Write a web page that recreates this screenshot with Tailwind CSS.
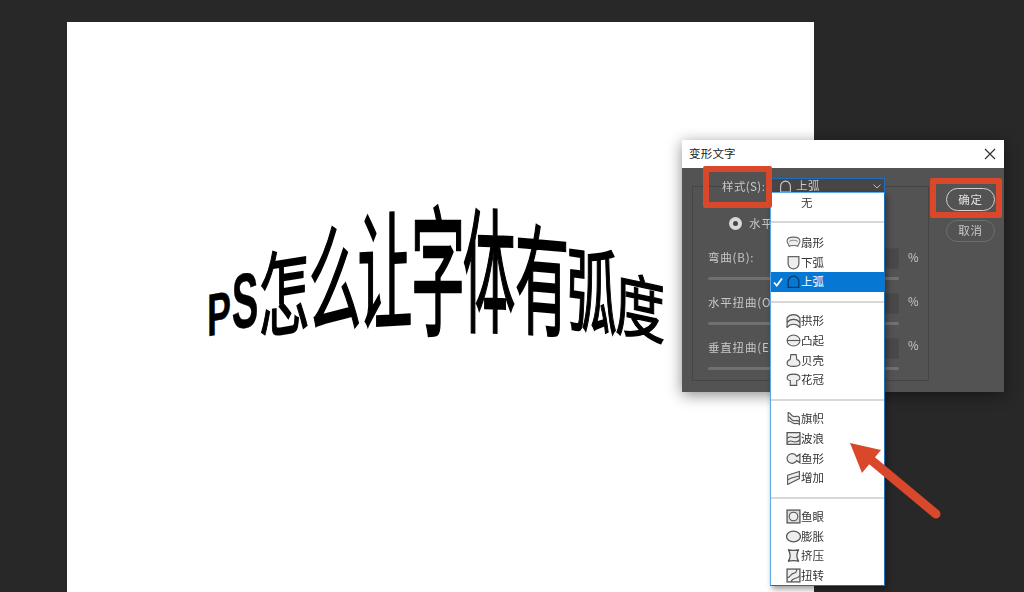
<!DOCTYPE html>
<html lang="zh">
<head>
<meta charset="utf-8">
<script src="https://cdn.jsdelivr.net/npm/@tailwindcss/browser@4"></script>
</head>
<body class="m-0 w-[1024px] h-[592px] overflow-hidden bg-[#282828] font-['Liberation_Sans','Noto_Sans_CJK_SC',sans-serif]">
<div class="relative w-[1024px] h-[592px] overflow-hidden pt-[22px] pl-[67px] blur-[0.35px]">
  <!-- canvas -->
  <div class="w-[747px] h-[570px] bg-white"></div>

  <!-- warped text -->
  <div class="absolute inset-0 text-black text-[50px] leading-[50px] font-['Noto_Sans_CJK_SC',sans-serif] [-webkit-text-stroke:0.9px_#000]">
    <span class="absolute left-[194px] top-[289px] w-[50px] h-[50px] text-center font-bold font-['Liberation_Sans'] [-webkit-text-stroke:0.3px_#000] [transform:skewY(-10deg)_scale(.72,1.2)]">P</span>
    <span class="absolute left-[220px] top-[276px] w-[50px] h-[50px] text-center font-bold font-['Liberation_Sans'] [-webkit-text-stroke:0.3px_#000] [transform:skewY(-8deg)_scale(.8,1.55)]">S</span>
    <span class="absolute left-[259px] top-[262px] w-[50px] h-[50px] text-center [transform:skewY(-9deg)_scale(1.02,1.85)]">怎</span>
    <span class="absolute left-[310px] top-[246px] w-[50px] h-[50px] text-center [transform:skewY(-5deg)_scale(1.05,2.3)]">么</span>
    <span class="absolute left-[360px] top-[238px] w-[50px] h-[50px] text-center [transform:skewY(-3deg)_scale(1.1,2.55)]">让</span>
    <span class="absolute left-[413px] top-[237px] w-[50px] h-[50px] text-center [transform:scale(1.08,2.8)]">字</span>
    <span class="absolute left-[464px] top-[238px] w-[50px] h-[50px] text-center [transform:skewY(2deg)_scale(1.05,2.7)]">体</span>
    <span class="absolute left-[517px] top-[248px] w-[50px] h-[50px] text-center [transform:skewY(5deg)_scale(1.08,2.4)]">有</span>
    <span class="absolute left-[567px] top-[260px] w-[50px] h-[50px] text-center [transform:skewY(8deg)_scale(1,1.85)]">弧</span>
    <span class="absolute left-[615px] top-[278px] w-[50px] h-[50px] text-center [transform:skewY(12deg)_scale(1,1.4)]">度</span>
  </div>

  <!-- dialog -->
  <div class="absolute left-[682px] top-[140px] w-[322px] h-[252px] bg-[#535353] shadow-[0_3px_14px_rgba(0,0,0,.45)] text-[11.5px] text-[#c8c8c8] font-['Noto_Sans_CJK_SC',sans-serif]">
    <div class="h-[28px] bg-white flex items-center justify-between pl-[7px] pr-[8px] text-[#222] tracking-[.2px]">
      <span>变形文字</span>
      <svg class="w-[12px] h-[12px]" viewBox="0 0 12 12"><path d="M1 1l10 10M11 1L1 11" stroke="#333" stroke-width="1.2" fill="none"/></svg>
    </div>
    <div class="relative flex h-[224px] pt-[18px] pl-[10px]">
      <div class="w-[237px] h-[195px] border border-[#454545] relative">
        <div class="absolute left-[15px] top-[60px] w-[191px]">
          <div class="flex items-center h-[22px] justify-between">
            <span class="tracking-[.8px]">弯曲(B):</span>
            <span class="w-[38px] h-[21px] bg-[#484848] border border-[#4c4c4c]"></span>
          </div>
          <div class="h-[3px] bg-[#707070] rounded-full mt-[8px]"></div>
          <div class="flex items-center h-[22px] justify-between mt-[12px]">
            <span class="tracking-[.8px]">水平扭曲(O</span>
            <span class="w-[38px] h-[21px] bg-[#484848] border border-[#4c4c4c]"></span>
          </div>
          <div class="h-[3px] bg-[#707070] rounded-full mt-[8px]"></div>
          <div class="flex items-center h-[22px] justify-between mt-[12px]">
            <span class="tracking-[.8px]">垂直扭曲(E</span>
            <span class="w-[38px] h-[21px] bg-[#484848] border border-[#4c4c4c]"></span>
          </div>
          <div class="h-[3px] bg-[#707070] rounded-full mt-[8px]"></div>
        </div>
        <div class="absolute left-[36px] top-[28px] flex items-center gap-[7px]">
          <span class="w-[13px] h-[13px] rounded-full bg-[#d8d8d8] flex items-center justify-center"><span class="w-[5px] h-[5px] rounded-full bg-[#444]"></span></span>
          <span class="tracking-[1px]">水平</span>
        </div>
      </div>
      <div class="flex flex-col ml-[17px] pt-[2px] gap-[9px]">
        <button class="w-[49px] h-[23px] rounded-full border border-[#d0d0d0] text-[#e0e0e0] text-[11.5px] tracking-[.8px]">确定</button>
        <button class="w-[49px] h-[22px] rounded-full border border-[#6e6e6e] text-[#c8c8c8] text-[11.5px] tracking-[.8px]">取消</button>
      </div>
      <!-- percent signs -->
      <span class="absolute left-[226px] top-[81px] text-[11.5px]">%</span>
      <span class="absolute left-[226px] top-[125px] text-[11.5px]">%</span>
      <span class="absolute left-[226px] top-[169px] text-[11.5px]">%</span>
    </div>
    <span class="absolute left-[40px] top-[38px] tracking-[.4px]">样式(S):</span>
    <div class="absolute left-[89px] top-[38px] w-[114px] h-[15px] bg-[#464646] border border-[#1a6fc0] border-b-0 flex items-center pl-[7px] gap-[4px] text-[#c8c8c8]">
      <svg class="w-[13px] h-[13px]" viewBox="0 0 12 12"><path d="M1.500 11V5.500a4.500 4.500 0 0 1 9 0V11z" fill="none" stroke="#d0d0d0" stroke-width="1"/></svg>
      <span class="tracking-[.4px]">上弧</span>
      <svg class="absolute right-[3px] top-[5px] w-[8px] h-[5px]" viewBox="0 0 8 5"><path d="M.5.5L4 4 7.500.5" fill="none" stroke="#bbb"/></svg>
    </div>
  </div>

  <!-- dropdown menu -->
  <div class="absolute left-[770px] top-[192px] w-[115px] h-[394px] bg-white border border-[#5ba7e8] border-r-[#1d6fb8] border-b-[#1d6fb8] shadow-[2px_3px_6px_rgba(0,0,0,.4)] text-[11.5px] leading-[19.6px] text-[#333] font-['Noto_Sans_CJK_SC',sans-serif]">
    <div class="h-[18.6px] pl-[30px] flex items-center">无</div>
    <div class="h-[21.4px] flex items-center"><div class="w-full h-[2px] bg-[#d8d8d8]"></div></div>
    <div class="h-[19.6px] pl-[30px] flex items-center relative">扇形
      <svg class="absolute left-[15px] top-[2px] w-[15px] h-[15px]" viewBox="0 0 14 14"><path d="M1 5.500C1 2.500 4 2 7 2s6 .5 6 3.500c0 2-1.500 3-2 5-1.500-1-6.500-1-8 0-.5-2-2-3-2-5z" fill="#eee" stroke="#666"/><path d="M3 6c2-1.500 6-1.500 8 0" fill="none" stroke="#666" stroke-width=".7"/></svg></div>
    <div class="h-[19.6px] pl-[30px] flex items-center relative">下弧
      <svg class="absolute left-[15px] top-[2px] w-[15px] h-[15px]" viewBox="0 0 14 14"><path d="M2 1.500h10v6.500a5 5 0 0 1-10 0z" fill="#eee" stroke="#666" stroke-width="1.200"/></svg></div>
    <div class="h-[19.6px] pl-[30px] flex items-center relative bg-[#0678d4] text-white">上弧
      <svg class="absolute left-[2px] top-[5px] w-[10px] h-[10px]" viewBox="0 0 10 10"><path d="M1 5.500L3.800 8.500 9 1.500" fill="none" stroke="#fff" stroke-width="1.800"/></svg>
      <svg class="absolute left-[15px] top-[2px] w-[15px] h-[15px]" viewBox="0 0 14 14"><path d="M2 12.500V7a5 5 0 0 1 10 0v5.500z" fill="#0678d4" stroke="#0a3a66" stroke-width="1.200"/></svg></div>
    <div class="h-[19.6px] flex items-center"><div class="w-full h-[2px] bg-[#d8d8d8]"></div></div>
    <div class="h-[19.6px] pl-[30px] flex items-center relative">拱形
      <svg class="absolute left-[15px] top-[2px] w-[15px] h-[15px]" viewBox="0 0 14 14"><path d="M1 4.500c3-4 9-4 12 0v9c-3-4-9-4-12 0zM1 9c3-4 9-4 12 0" fill="#eee" stroke="#555" stroke-width="1.100"/></svg></div>
    <div class="h-[19.6px] pl-[30px] flex items-center relative">凸起
      <svg class="absolute left-[15px] top-[2px] w-[15px] h-[15px]" viewBox="0 0 14 14"><ellipse cx="7" cy="7" rx="6" ry="5.200" fill="#eee" stroke="#555"/><path d="M1 7h12" stroke="#555"/></svg></div>
    <div class="h-[19.6px] pl-[30px] flex items-center relative">贝壳
      <svg class="absolute left-[15px] top-[2px] w-[15px] h-[15px]" viewBox="0 0 14 14"><path d="M4.500 1.500h5L10 6c2 .5 3 2 3 3.500 0 2-2.500 3-6 3s-6-1-6-3C1 8 2 6.500 4 6z" fill="#eee" stroke="#555"/></svg></div>
    <div class="h-[19.6px] pl-[30px] flex items-center relative">花冠
      <svg class="absolute left-[15px] top-[2px] w-[15px] h-[15px]" viewBox="0 0 14 14"><path d="M7 2c4 0 6 1.500 6 3.500 0 1.500-2 2.500-3 2.500v4.500H4V8C3 8 1 7 1 5.500 1 3.500 3 2 7 2z" fill="#eee" stroke="#555"/></svg></div>
    <div class="h-[19.6px] flex items-center"><div class="w-full h-[2px] bg-[#d8d8d8]"></div></div>
    <div class="h-[19.6px] pl-[30px] flex items-center relative">旗帜
      <svg class="absolute left-[15px] top-[2px] w-[15px] h-[15px]" viewBox="0 0 14 14"><path d="M2 1.500c3 0 2 3 5 3.500s4-1 5.500 1v6.500c-2-2-3 0-5.500-1s-3-3-5-2zM2 5.500c3 0 2 3 5 3.500s4-1 5.500 1" fill="#eee" stroke="#555"/></svg></div>
    <div class="h-[19.6px] pl-[30px] flex items-center relative">波浪
      <svg class="absolute left-[15px] top-[2px] w-[15px] h-[15px]" viewBox="0 0 14 14"><path d="M1 1.500h12v11H1z" fill="#eee" stroke="#555" stroke-width="1.200"/><path d="M1 7c4-5 7 3 12-3M1 11c4-5 7 3 12-3" fill="none" stroke="#555"/></svg></div>
    <div class="h-[19.6px] pl-[30px] flex items-center relative">鱼形
      <svg class="absolute left-[15px] top-[2px] w-[15px] h-[15px]" viewBox="0 0 14 14"><path d="M6 2.500c2 0 3 1 4 2.500l3-2v8l-3-2c-1 1.500-2 2.500-4 2.500-3 0-5-2-5-4.500s2-4.500 5-4.500z" fill="#eee" stroke="#555" stroke-width="1.100"/></svg></div>
    <div class="h-[19.6px] pl-[30px] flex items-center relative">增加
      <svg class="absolute left-[15px] top-[2px] w-[15px] h-[15px]" viewBox="0 0 14 14"><path d="M1.500 5l11-3.500v6.500l-11 5.500zM1.500 9.500c3-3 8-3 11-4" fill="#eee" stroke="#555"/></svg></div>
    <div class="h-[19.6px] flex items-center"><div class="w-full h-[2px] bg-[#d8d8d8]"></div></div>
    <div class="h-[19.6px] pl-[30px] flex items-center relative">鱼眼
      <svg class="absolute left-[15px] top-[2px] w-[15px] h-[15px]" viewBox="0 0 14 14"><rect x="1" y="1" width="12" height="12" fill="#ddd" stroke="#555" stroke-width="1.200"/><circle cx="7" cy="7" r="4" fill="#eee" stroke="#555"/></svg></div>
    <div class="h-[19.6px] pl-[30px] flex items-center relative">膨胀
      <svg class="absolute left-[15px] top-[2px] w-[15px] h-[15px]" viewBox="0 0 14 14"><ellipse cx="7" cy="7" rx="6.500" ry="5" fill="#eee" stroke="#555" stroke-width="1.200"/></svg></div>
    <div class="h-[19.6px] pl-[30px] flex items-center relative">挤压
      <svg class="absolute left-[15px] top-[2px] w-[15px] h-[15px]" viewBox="0 0 14 14"><path d="M2 1.500c2 1 8 1 10 0-2.500 3-2.500 8 0 11-2-1-8-1-10 0 2.500-3 2.500-8 0-11z" fill="#eee" stroke="#555" stroke-width="1.200"/></svg></div>
    <div class="h-[19.6px] pl-[30px] flex items-center relative">扭转
      <svg class="absolute left-[15px] top-[2px] w-[15px] h-[15px]" viewBox="0 0 14 14"><rect x="1" y="1" width="12" height="12" fill="#eee" stroke="#555" stroke-width="1.200"/><path d="M1 9c4 0 3-4 6-4s3-3 3-4M5 13c0-4 5-2 8-6" fill="none" stroke="#555"/></svg></div>
  </div>

  <!-- red annotations -->
  <div class="absolute left-[703px] top-[166px] w-[69px] h-[42px] border-[6px] border-[#d9482b] rounded-[2px]"></div>
  <div class="absolute left-[930px] top-[178px] w-[72px] h-[40px] border-[6px] border-[#d9482b] rounded-[2px]"></div>
  <svg class="absolute left-[840px] top-[435px] w-[110px] h-[90px]" viewBox="0 0 110 90">
    <path d="M96 79L30 24" stroke="#d9482b" stroke-width="9" stroke-linecap="round" fill="none"/>
    <path d="M10 8L41 15 22 38z" fill="#d9482b"/>
  </svg>
</div>
</body>
</html>
